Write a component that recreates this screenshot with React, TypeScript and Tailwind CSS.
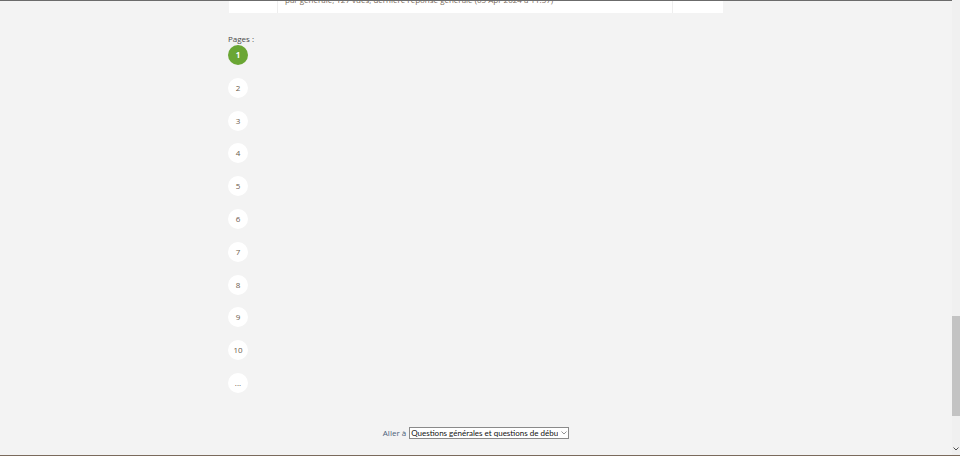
import React from "react";

const pages = ["1", "2", "3", "4", "5", "6", "7", "8", "9", "10", "..."];

export default function App() {
  return (
    <div
      className="flex h-[456px] w-[960px] overflow-hidden bg-[#f3f3f3]"
      style={{ fontFamily: '"Open Sans", "Noto Sans", sans-serif' }}
    >
      <div className="flex flex-1 flex-col">
        <div className="h-px bg-[#6b6b6b]" />
        <div className="ml-[229px] flex h-[12px] w-[494px] bg-white">
          <div className="w-[49px] border-r border-[#eeeeee]" />
          <div className="relative w-[395px] overflow-hidden border-r border-[#eeeeee]">
            <div className="absolute left-[7px] top-[-6px] whitespace-nowrap text-[8px] leading-[10px] text-[#7a6b5a]">
              par générale, 127 vues, dernière réponse générale (05 Apr 2024 à 11:57)
            </div>
          </div>
          <div className="flex-1" />
        </div>
        <div className="ml-[228px] mt-[21px] text-[8px] leading-[10px] text-[#4a4a4a]">
          Pages :
        </div>
        <div className="ml-[228px] mt-px flex flex-col gap-[12.8px]">
          {pages.map((p, i) => (
            <div
              key={p}
              className={
                i === 0
                  ? "flex h-[20px] w-[20px] items-center justify-center rounded-full bg-[#6aa634] text-[8px] font-bold text-white"
                  : "flex h-[20px] w-[20px] items-center justify-center rounded-full bg-white text-[8px] text-[#6b5b4b]"
              }
            >
              {p}
            </div>
          ))}
        </div>
        <div className="mt-[34px] flex items-center justify-center gap-[3px] text-[8px]">
          <span className="text-[#4a6078]">Aller à</span>
          <div
            className="flex h-[12px] w-[160px] items-center justify-between border border-[#8a8a8a] bg-white pl-[1px] pr-[1px] text-[#111]"
            style={{ fontFamily: 'Lato, "Open Sans", sans-serif' }}
          >
            <span className="overflow-hidden whitespace-nowrap text-[8px] leading-[10px]">
              Questions générales et questions de débu
            </span>
            <svg width="6" height="4" viewBox="0 0 6 4" className="shrink-0">
              <path d="M0.5 0.5 L3 3 L5.5 0.5" fill="none" stroke="#777" strokeWidth="0.8" />
            </svg>
          </div>
        </div>
        <div className="flex-1" />
        <div className="h-px bg-[#7a6a5c]" />
      </div>
      <div className="flex w-[8px] flex-col bg-[#f0f0f0]">
        <div className="h-[316px]" />
        <div className="h-[100px] bg-[#c3c3c3]" />
        <div className="flex-1" />
        <div className="flex h-[12px] items-center justify-center">
          <svg width="6" height="4" viewBox="0 0 6 4">
            <path d="M0.5 0.5 L3 3 L5.5 0.5" fill="none" stroke="#505050" strokeWidth="1" />
          </svg>
        </div>
        <div className="h-[1px] bg-[#7a6a5c]" />
      </div>
    </div>
  );
}
